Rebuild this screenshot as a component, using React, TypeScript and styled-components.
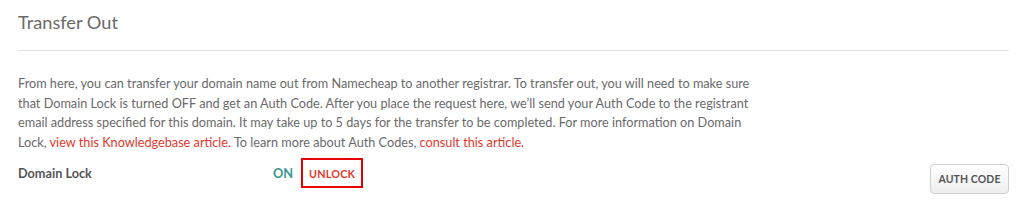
import React from "react";
import styled, { createGlobalStyle } from "styled-components";

const GlobalStyle = createGlobalStyle`
  html, body {
    margin: 0;
    padding: 0;
    background: #fff;
  }
  body {
    font-family: "Lato", "Open Sans", sans-serif;
    color: #666;
  }
`;

const Panel = styled.section`
  width: 1024px;
  height: 211px;
  box-sizing: border-box;
  padding: 0 15px 0 18px;
  background: #fff;
`;

const Title = styled.h2`
  margin: 0;
  padding: 10px 0 0;
  height: 51px;
  box-sizing: border-box;
  font-size: 18.2px;
  font-weight: 400;
  line-height: 24px;
  color: #6a6a6a;
  border-bottom: 1px solid #e3e3e3;
`;

const Description = styled.p`
  margin: 23px 0 0;
  font-size: 12.7px;
  line-height: 19.5px;
  color: #6a6a6a;
`;

const Link = styled.a`
  color: #e2382d;
  text-decoration: none;
`;

const LockRow = styled.div`
  display: flex;
  align-items: center;
  margin-top: 6px;
  height: 30px;
`;

const Label = styled.div`
  width: 255px;
  font-size: 12.7px;
  font-weight: 700;
  color: #555;
`;

const Status = styled.span`
  font-size: 12.7px;
  font-weight: 700;
  color: #3a9595;
  margin-right: 8px;
`;

const UnlockButton = styled.button`
  height: 30px;
  padding: 0 6px;
  border: 2px solid #e60000;
  background: #fff;
  color: #e2382d;
  font-family: inherit;
  font-size: 10.8px;
  font-weight: 700;
  letter-spacing: 0.2px;
`;

const AuthButton = styled.button`
  align-self: flex-start;
  margin: 6px 0 0 auto;
  height: 30px;
  width: 79px;
  padding: 0;
  border: 1px solid #cfcfcf;
  border-radius: 4px;
  background: linear-gradient(#fff, #eee);
  color: #555;
  font-family: inherit;
  font-size: 10.5px;
  font-weight: 700;
  letter-spacing: 0.1px;
`;

export default function App() {
  return (
    <>
      <GlobalStyle />
      <Panel>
        <Title>Transfer Out</Title>
        <Description>
          From here, you can transfer your domain name out from Namecheap to
          another registrar. To transfer out, you will need to make sure
          <br />
          that Domain Lock is turned OFF and get an Auth Code. After you place
          the request here, we’ll send your Auth Code to the registrant
          <br />
          email address specified for this domain. It may take up to 5 days for
          the transfer to be completed. For more information on Domain
          <br />
          Lock, <Link href="#">view this Knowledgebase article.</Link> To learn
          more about Auth Codes, <Link href="#">consult this article.</Link>
        </Description>
        <LockRow>
          <Label>Domain Lock</Label>
          <Status>ON</Status>
          <UnlockButton>UNLOCK</UnlockButton>
          <AuthButton>AUTH CODE</AuthButton>
        </LockRow>
      </Panel>
    </>
  );
}
